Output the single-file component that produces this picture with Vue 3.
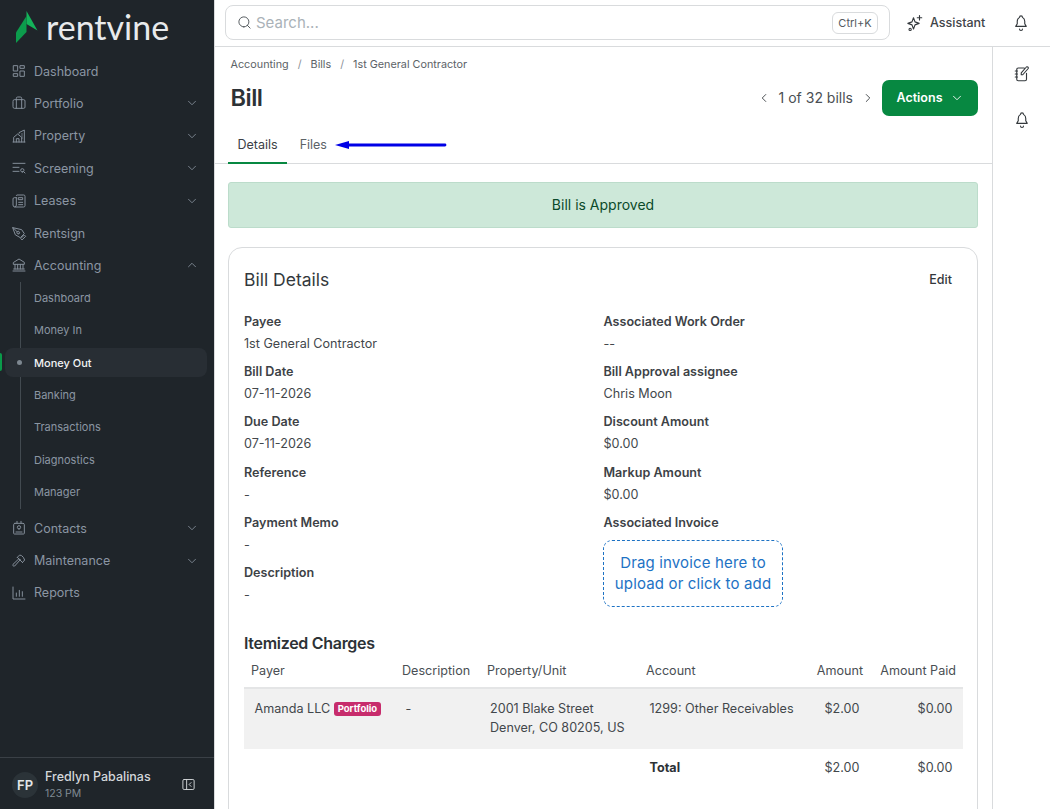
<script setup>
const icons = {
  dashboard: 'M4 4h6v8H4zM14 4h6v4h-6zM14 12h6v8h-6zM4 16h6v4H4z',
  portfolio: 'M3 9a2 2 0 0 1 2-2h14a2 2 0 0 1 2 2v9a2 2 0 0 1-2 2H5a2 2 0 0 1-2-2zM8 7V5a2 2 0 0 1 2-2h4a2 2 0 0 1 2 2v2M8 7v13M16 7v13',
  property: 'M3 21h18M4 21v-7l6-5 6 5v7M8 21v-5h4v5M12 8V7l8-4v18M16 9h1M16 12h1M16 15h1',
  screening: 'M3 5h18M3 11h9M3 17h9M17 18a2.5 2.5 0 1 0 0-5 2.5 2.5 0 0 0 0 5zM19 17.5l2 2',
  leases: 'M8 4a1 1 0 0 1 1-1h10a2 2 0 0 1 2 2v14a2 2 0 0 1-2 2H6a3 3 0 0 1-3-3V9a2 2 0 0 1 2-2h3M8 7v11a3 3 0 0 1-2 3M11.5 7h6v3h-6zM11.5 14h6M11.5 17.5h6',
  rentsign: 'M3 4l13 3 4 6-6 6-7-4zM3 4l6.5 6.5M12 13a2 2 0 1 0-2.8-2.8A2 2 0 0 0 12 13zM15 20l5-5 2 2-5 5z',
  accounting: 'M3 21h18M4 18h16M6 18v-7M10 18v-7M14 18v-7M18 18v-7M4 8l8-5 8 5v3H4z',
  contacts: 'M6 5h12a2 2 0 0 1 2 2v13a1 1 0 0 1-1 1H5a1 1 0 0 1-1-1V7a2 2 0 0 1 2-2zM9 2v3M15 2v3M12 13.500a2.500 2.500 0 1 0 0-5 2.500 2.500 0 0 0 0 5zM7.500 18h9',
  maintenance: 'M14 10l-8.500 9.500a1.800 1.800 0 0 1-2.500-2.500L12 8.500M9.500 6.500l8 8M9.500 6.500L13 3l3 1 2.500 2.500 2 4-3.500 4',
  reports: 'M3 3v18h18M8 17v-5M12.500 17V8M17 17v-7',
  search: 'M11 19a8 8 0 1 0 0-16 8 8 0 0 0 0 16zM21 21l-4.500-4.500',
  sparkle: 'M10 5l2 5.500 5.500 2-5.500 2L10 20l-2-5.500-5.500-2 5.500-2zM18 2v6M15 5h6M5.500 19a1.500 1.500 0 1 0 0 3 1.500 1.500 0 0 0 0-3z',
  bell: 'M10 4.500a2 2 0 1 1 4 0 6 6 0 0 1 3 5.500v3l2 3.500H5l2-3.500v-3a6 6 0 0 1 3-5.500zM10 20a2 2 0 0 0 4 0',
  notes: 'M7 4h8M18 11v8a2 2 0 0 1-2 2H7a2 2 0 0 1-2-2V6a2 2 0 0 1 2-2M3 8h3M3 12h3M3 16h3M13 13l7-8a1.500 1.500 0 0 0-2.500-2L11 10.500V13z',
  collapse: 'M5 4h14a2 2 0 0 1 2 2v12a2 2 0 0 1-2 2H5a2 2 0 0 1-2-2V6a2 2 0 0 1 2-2zM9 4v16M16 9l-3 3 3 3',
  down: 'M6 9l6 6 6-6',
  up: 'M6 15l6-6 6 6',
  left: 'M15 6l-6 6 6 6',
  right: 'M9 6l6 6-6 6',
}

const topNav = [
  { label: 'Dashboard', icon: 'dashboard' },
  { label: 'Portfolio', icon: 'portfolio', chevron: 'down' },
  { label: 'Property', icon: 'property', chevron: 'down' },
  { label: 'Screening', icon: 'screening', chevron: 'down' },
  { label: 'Leases', icon: 'leases', chevron: 'down' },
  { label: 'Rentsign', icon: 'rentsign' },
  { label: 'Accounting', icon: 'accounting', chevron: 'up' },
]
const subNav = ['Dashboard', 'Money In', 'Money Out', 'Banking', 'Transactions', 'Diagnostics', 'Manager']
const bottomNav = [
  { label: 'Contacts', icon: 'contacts', chevron: 'down' },
  { label: 'Maintenance', icon: 'maintenance', chevron: 'down' },
  { label: 'Reports', icon: 'reports' },
]

const leftFields = [
  ['Payee', '1st General Contractor'],
  ['Bill Date', '07-11-2026'],
  ['Due Date', '07-11-2026'],
  ['Reference', '-'],
  ['Payment Memo', '-'],
  ['Description', '-'],
]
const rightFields = [
  ['Associated Work Order', '--'],
  ['Bill Approval assignee', 'Chris Moon'],
  ['Discount Amount', '$0.00'],
  ['Markup Amount', '$0.00'],
]
</script>

<template>
  <div class="app">
    <aside class="sidebar">
      <div class="logo">
        <svg class="logo-mark" width="24" height="34" viewBox="0 0 24 34">
          <polygon class="mark-a" points="10.500,0 21.500,19.500 10.500,13" />
          <polygon class="mark-b" points="0,21.500 10.500,5 10.500,21 0,32" />
        </svg>
        <span class="logo-text">rentvine</span>
      </div>

      <nav class="nav">
        <div v-for="item in topNav" :key="item.label" class="nav-item">
          <svg class="nav-icon" viewBox="0 0 24 24"><path :d="icons[item.icon]" /></svg>
          <span>{{ item.label }}</span>
          <svg v-if="item.chevron" class="nav-chevron" viewBox="0 0 24 24"><path :d="icons[item.chevron]" /></svg>
        </div>

        <div class="subnav">
          <div
            v-for="sub in subNav"
            :key="sub"
            class="sub-item"
            :class="{ active: sub === 'Money Out' }"
          >
            {{ sub }}
          </div>
        </div>

        <div v-for="item in bottomNav" :key="item.label" class="nav-item">
          <svg class="nav-icon" viewBox="0 0 24 24"><path :d="icons[item.icon]" /></svg>
          <span>{{ item.label }}</span>
          <svg v-if="item.chevron" class="nav-chevron" viewBox="0 0 24 24"><path :d="icons[item.chevron]" /></svg>
        </div>
      </nav>

      <div class="user">
        <div class="avatar">FP</div>
        <div class="user-info">
          <div class="user-name">Fredlyn Pabalinas</div>
          <div class="user-org">123 PM</div>
        </div>
        <svg class="collapse" viewBox="0 0 24 24"><path :d="icons.collapse" /></svg>
      </div>
    </aside>

    <div class="body">
      <header class="topbar">
        <div class="search">
          <svg class="search-icon" viewBox="0 0 24 24"><path :d="icons.search" /></svg>
          <span class="search-text">Search...</span>
          <span class="kbd">Ctrl+K</span>
        </div>
        <div class="assistant">
          <svg class="icon18" viewBox="0 0 24 24"><path :d="icons.sparkle" /></svg>
          <span>Assistant</span>
        </div>
        <svg class="icon18 top-bell" viewBox="0 0 24 24"><path :d="icons.bell" /></svg>
      </header>

      <div class="workspace">
        <main class="main">
          <div class="page-head">
            <div class="crumbs">
              <span>Accounting</span><i>/</i><span>Bills</span><i>/</i><span>1st General Contractor</span>
            </div>
            <div class="title-row">
              <h1>Bill</h1>
              <div class="pager">
                <svg class="icon14" viewBox="0 0 24 24"><path :d="icons.left" /></svg>
                <span>1 of 32 bills</span>
                <svg class="icon14" viewBox="0 0 24 24"><path :d="icons.right" /></svg>
              </div>
              <button class="actions">
                Actions
                <svg class="icon14" viewBox="0 0 24 24"><path :d="icons.down" /></svg>
              </button>
            </div>
          </div>

          <div class="tabs">
            <div class="tab active">Details</div>
            <div class="tab">Files</div>
            <svg class="arrow" width="112" height="10" viewBox="0 0 112 10">
              <path d="M0 5L14 1V3.600H110a1.400 1.400 0 0 1 0 2.800H14V9z" />
            </svg>
          </div>

          <div class="content">
            <div class="alert">Bill is Approved</div>

            <section class="card">
              <div class="card-head">
                <h2>Bill Details</h2>
                <span class="edit">Edit</span>
              </div>

              <div class="fields">
                <div class="col">
                  <div v-for="f in leftFields" :key="f[0]" class="field">
                    <div class="label">{{ f[0] }}</div>
                    <div class="value">{{ f[1] }}</div>
                  </div>
                </div>
                <div class="col">
                  <div v-for="f in rightFields" :key="f[0]" class="field">
                    <div class="label">{{ f[0] }}</div>
                    <div class="value">{{ f[1] }}</div>
                  </div>
                  <div class="field">
                    <div class="label">Associated Invoice</div>
                    <div class="dropzone">Drag invoice here to upload or click to add</div>
                  </div>
                </div>
              </div>

              <h3>Itemized Charges</h3>
              <div class="table">
                <div class="thead">
                  <div>Payer</div>
                  <div>Description</div>
                  <div>Property/Unit</div>
                  <div>Account</div>
                  <div class="num">Amount</div>
                  <div class="num">Amount Paid</div>
                </div>
                <div class="trow">
                  <div>Amanda LLC <span class="badge">Portfolio</span></div>
                  <div>-</div>
                  <div>2001 Blake Street<br />Denver, CO 80205, US</div>
                  <div>1299: Other Receivables</div>
                  <div class="num">$2.00</div>
                  <div class="num">$0.00</div>
                </div>
                <div class="trow total">
                  <div></div>
                  <div></div>
                  <div></div>
                  <div><b>Total</b></div>
                  <div class="num">$2.00</div>
                  <div class="num">$0.00</div>
                </div>
              </div>
            </section>
          </div>
        </main>

        <aside class="rail">
          <svg class="icon18" viewBox="0 0 24 24"><path :d="icons.notes" /></svg>
          <svg class="icon18" viewBox="0 0 24 24"><path :d="icons.bell" /></svg>
        </aside>
      </div>
    </div>
  </div>
</template>

<style>
html,
body {
  margin: 0;
  height: 100%;
  overflow: hidden;
}
</style>

<style scoped>
* {
  box-sizing: border-box;
}

svg path {
  fill: none;
  stroke: currentColor;
  stroke-width: 1.5;
  stroke-linecap: round;
  stroke-linejoin: round;
}

.arrow path {
  fill: #0000e6;
  stroke: none;
}

.mark-a {
  fill: #14b45a;
}

.mark-b {
  fill: #0c9c4c;
}

.app {
  display: flex;
  width: 1050px;
  height: 809px;
  overflow: hidden;
  font-family: Inter, "Noto Sans", sans-serif;
  font-size: 12.600px;
  color: #3b4045;
  background: #fff;
}

.sidebar {
  width: 215px;
  flex-shrink: 0;
  display: flex;
  flex-direction: column;
  background: #1f252a;
  border-right: 1px solid #d9dbdd;
}

.logo {
  height: 54.900px;
  display: flex;
  align-items: flex-start;
  padding: 11px 0 0 16px;
}

.logo-mark {
  flex-shrink: 0;
}

.logo-text {
  margin: -4px 0 0 6px;
  font-family: Lato, sans-serif;
  font-size: 34px;
  line-height: 40px;
  font-weight: 400;
  color: #e8eaec;
}

.nav {
  flex: 1;
}

.nav-item {
  height: 32.400px;
  display: flex;
  align-items: center;
  padding: 0 15px 0 11px;
  font-size: 12.500px;
  color: #8b96a3;
}

.nav-icon {
  width: 16px;
  height: 16px;
  margin-right: 7px;
  flex-shrink: 0;
  color: #848e99;
}

.nav-chevron {
  width: 14px;
  height: 14px;
  margin-left: auto;
  color: #848e99;
}

.subnav {
  position: relative;
  padding-bottom: 3.600px;
}

.subnav::before {
  content: "";
  position: absolute;
  left: 20px;
  top: 0;
  bottom: 3px;
  width: 1px;
  background: #424a50;
}

.sub-item {
  position: relative;
  height: 32.400px;
  display: flex;
  align-items: center;
  margin: 0 7px 0 5px;
  padding-left: 29px;
  font-size: 11px;
  color: #8b96a3;
}

.sub-item.active {
  height: 29px;
  margin-top: 1.700px;
  margin-bottom: 1.700px;
  background: #282e34;
  border-radius: 8px;
  color: #f2f4f5;
  font-weight: 500;
}

.sub-item.active::before {
  content: "";
  position: absolute;
  left: -5px;
  top: 5px;
  width: 2px;
  height: 18px;
  border-radius: 0 2px 2px 0;
  background: #0a9a4a;
}

.sub-item.active::after {
  content: "";
  position: absolute;
  left: 12px;
  top: 12px;
  width: 5px;
  height: 5px;
  border-radius: 50%;
  background: #7d8790;
}

.user {
  height: 52px;
  display: flex;
  align-items: center;
  padding: 2px 18px 0 12px;
  border-top: 1px solid #3a4046;
}

.avatar {
  width: 26px;
  height: 26px;
  border-radius: 50%;
  background: #2b3338;
  color: #e4e7e9;
  font-weight: 600;
  font-size: 13px;
  display: flex;
  align-items: center;
  justify-content: center;
  flex-shrink: 0;
}

.user-info {
  margin-left: 7px;
  flex: 1;
}

.user-name {
  font-size: 12.500px;
  font-weight: 500;
  line-height: 16px;
  color: #d3d7da;
}

.user-org {
  margin-top: 1px;
  font-size: 10.500px;
  line-height: 15px;
  color: #7f8a93;
}

.collapse {
  width: 15px;
  height: 15px;
  color: #d3d7da;
}

.body {
  flex: 1;
  min-width: 0;
  display: flex;
  flex-direction: column;
}

.topbar {
  height: 47px;
  flex-shrink: 0;
  display: flex;
  align-items: center;
  padding: 0 20px 1px 10px;
  border-bottom: 1px solid #d9dbdd;
}

.search {
  width: 665px;
  height: 35px;
  display: flex;
  align-items: center;
  padding: 0 11px;
  border: 1px solid #d9dbdd;
  border-radius: 8px;
}

.search-icon {
  width: 15px;
  height: 15px;
  color: #4d5358;
}

.search-text {
  margin-left: 4px;
  font-size: 15px;
  color: #aab2b8;
}

.kbd {
  margin-left: auto;
  padding: 0 5px;
  height: 22px;
  width: 46px;
  display: flex;
  align-items: center;
  justify-content: center;
  border: 1px solid #d9dbdd;
  border-radius: 6px;
  font-size: 11px;
  color: #54595e;
}

.assistant {
  display: flex;
  align-items: center;
  gap: 6px;
  margin-left: 16px;
  font-size: 12.500px;
  font-weight: 500;
  color: #3f4449;
}

.icon18 {
  width: 18px;
  height: 18px;
  flex-shrink: 0;
  color: #33383c;
}

.icon14 {
  width: 14px;
  height: 14px;
  flex-shrink: 0;
}

.top-bell {
  margin-left: auto;
}

.workspace {
  flex: 1;
  min-height: 0;
  display: flex;
}

.main {
  width: 778px;
  flex-shrink: 0;
  border-right: 1px solid #d9dbdd;
}

.page-head {
  height: 81px;
  padding: 10px 14px 0 15.500px;
}

.crumbs {
  display: flex;
  align-items: center;
  font-size: 10.800px;
  line-height: 15px;
  color: #5c6267;
}

.crumbs i {
  margin: 0 9px;
  font-style: normal;
  color: #8a9096;
}

.title-row {
  display: flex;
  align-items: center;
  margin-top: 8px;
}

h1 {
  margin: -2px auto 0 0;
  font-size: 23.500px;
  font-weight: 600;
  letter-spacing: -0.500px;
  color: #2d3236;
}

.pager {
  display: flex;
  align-items: center;
  gap: 8px;
  margin: -1px 7px 0 0;
  font-size: 14px;
  color: #4a4f54;
}

.pager svg {
  color: #33383c;
}

.actions {
  width: 96px;
  height: 36px;
  display: flex;
  align-items: center;
  justify-content: center;
  gap: 7px;
  padding-bottom: 2px;
  border: 0;
  border-radius: 7px;
  background: #078841;
  color: #fff;
  font-family: inherit;
  font-size: 12.500px;
  font-weight: 600;
}

.tabs {
  position: relative;
  height: 36px;
  display: flex;
  padding-left: 13px;
  border-bottom: 1px solid #d9dbdd;
}

.tab {
  height: 36px;
  padding: 9px 9.500px 0;
  margin-right: 3px;
  font-size: 12.500px;
  color: #5c6267;
}

.tab.active {
  color: #3b4045;
  border-bottom: 2px solid #078841;
}

.arrow {
  position: absolute;
  left: 120px;
  top: 12px;
}

.content {
  padding: 18px 14px 0 13px;
}

.alert {
  height: 46px;
  display: flex;
  align-items: center;
  justify-content: center;
  padding-bottom: 2px;
  background: #cde8d9;
  border: 1px solid #bcdccb;
  border-radius: 3px;
  font-size: 14px;
  color: #0b4a2a;
}

.card {
  margin-top: 19px;
  padding: 15px 14px 70px 15px;
  border: 1px solid #d9dbdd;
  border-radius: 14px;
}

.card-head {
  display: flex;
  align-items: center;
  justify-content: space-between;
  padding-right: 11px;
  height: 32px;
}

h2 {
  margin: 0;
  font-size: 17.500px;
  font-weight: 400;
  color: #33383c;
}

.edit {
  font-size: 12.500px;
  font-weight: 500;
  color: #33383c;
}

.fields {
  display: flex;
  margin-top: 16.500px;
}

.col {
  width: 359.500px;
  flex-shrink: 0;
}

.field {
  height: 50.400px;
}

.label {
  font-weight: 600;
  line-height: 20px;
  color: #3d4246;
}

.value {
  margin-top: 2px;
  line-height: 20px;
  color: #42474b;
}

.dropzone {
  width: 180px;
  height: 67px;
  margin: 6.500px 0 0 -0.500px;
  padding: 0 6px;
  display: flex;
  align-items: center;
  text-align: center;
  border: 1px dashed #1d72c4;
  border-radius: 9px;
  font-size: 15px;
  letter-spacing: 0.150px;
  line-height: 21px;
  color: #1d72c4;
}

h3 {
  margin: 19.500px 0 0;
  font-size: 16px;
  line-height: 20px;
  font-weight: 600;
  letter-spacing: -0.300px;
  color: #2d3236;
}

.thead,
.trow {
  display: grid;
  grid-template-columns: 151px 85px 159px 170px 61px 93px;
}

.thead {
  height: 36px;
  align-items: center;
  border-bottom: 2px solid #e4e5e6;
  color: #4a4f54;
}

.thead > div {
  padding: 0 7px;
}

.trow {
  height: 60px;
  background: #f1f1f1;
  line-height: 19px;
  color: #42474b;
}

.trow > div {
  padding: 10px 10.500px;
}

.trow > div:nth-child(3) {
  padding-left: 10px;
  padding-right: 0;
}

.trow.total {
  height: 38px;
  background: none;
}

.trow.total > div {
  padding-top: 9px;
}

.trow.total b {
  color: #2d3236;
}

.num {
  text-align: right;
  white-space: nowrap;
}

.badge {
  display: inline-block;
  padding: 0 4px;
  border-radius: 3px;
  background: #c72c6c;
  color: #fff;
  font-size: 9.500px;
  line-height: 14px;
  font-weight: 700;
  vertical-align: 1px;
}

.rail {
  flex: 1;
  display: flex;
  flex-direction: column;
  align-items: center;
  gap: 28px;
  padding-top: 18px;
  color: #33383c;
}
</style>
